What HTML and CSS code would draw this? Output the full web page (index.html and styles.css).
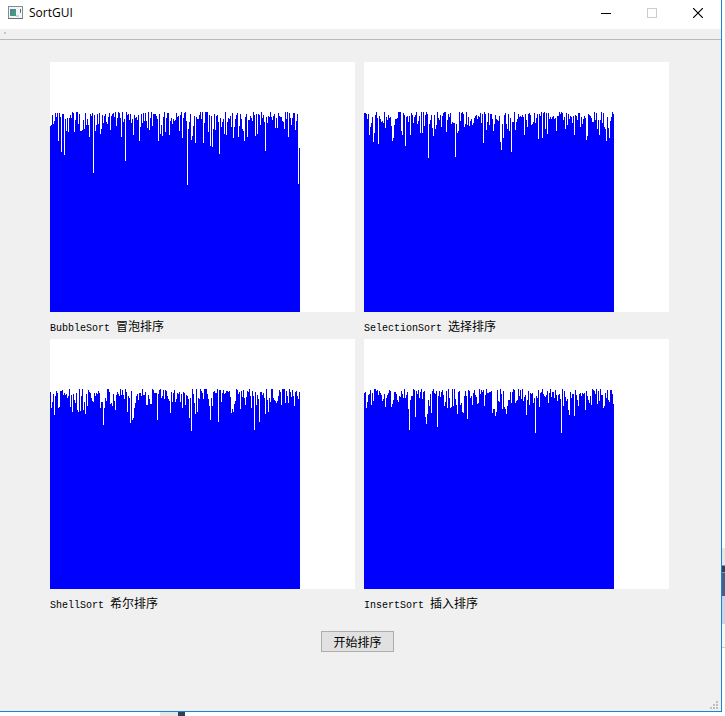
FILE: index.html
```html
<!DOCTYPE html>
<html lang="zh-CN">
<head>
<meta charset="utf-8">
<title>SortGUI</title>
<link rel="stylesheet" href="styles.css">
</head>
<body>
<div class="desktop">
  <main class="window">
    <header class="titlebar">
      <svg class="app-icon" width="15" height="13" viewBox="0 0 15 13" shape-rendering="crispEdges" aria-hidden="true">
        <defs>
          <linearGradient id="pane" x1="0" y1="0" x2="1" y2="1">
            <stop offset="0" stop-color="#4f7fae"/>
            <stop offset="1" stop-color="#48a463"/>
          </linearGradient>
        </defs>
        <rect width="15" height="13" fill="#858b94"/>
        <rect x="1" y="1" width="13" height="11" fill="#f3f5f7"/>
        <rect y="12" width="15" height="1" fill="#686e76"/>
        <rect x="2" y="3" width="6" height="7" fill="url(#pane)"/>
        <rect x="8" y="9" width="3" height="2" fill="#d0d3d7"/>
        <rect x="12" y="3" width="1" height="3" fill="#39758b"/>
        <rect x="12" y="6" width="1" height="1" fill="#58a977"/>
      </svg>
      <h1 class="title">SortGUI</h1>
      <button class="control" type="button" aria-label="最小化">
        <svg width="10" height="10" viewBox="0 0 10 10" shape-rendering="crispEdges"><rect y="5" width="10" height="1" fill="#000"/></svg>
      </button>
      <button class="control" type="button" aria-label="最大化" disabled>
        <svg width="10" height="10" viewBox="0 0 10 10"><rect x=".5" y=".5" width="9" height="9" fill="none" stroke="#ccc"/></svg>
      </button>
      <button class="control" type="button" aria-label="关闭">
        <svg width="10" height="10" viewBox="0 0 10 10"><path d="M0 0L10 10M10 0L0 10" fill="none" stroke="#000" stroke-width="1.2"/></svg>
      </button>
    </header>
    <div class="toolbar"><span class="handle"></span></div>
    <section class="charts">
      <figure class="chart"><div class="plot" data-series="bubble"></div><figcaption>BubbleSort <span class="han">冒泡排序</span></figcaption></figure>
      <figure class="chart"><div class="plot" data-series="selection"></div><figcaption>SelectionSort <span class="han">选择排序</span></figcaption></figure>
      <figure class="chart"><div class="plot" data-series="shell"></div><figcaption>ShellSort <span class="han">希尔排序</span></figcaption></figure>
      <figure class="chart"><div class="plot" data-series="insert"></div><figcaption>InsertSort <span class="han">插入排序</span></figcaption></figure>
    </section>
    <div class="actions"><button class="start" type="button">开始排序</button></div>
    <footer class="statusbar">
      <svg width="8" height="8" viewBox="0 0 8 8" shape-rendering="crispEdges" aria-hidden="true">
        <path d="M6 0h2v2H6zM3 3h2v2H3zM6 3h2v2H6zM0 6h2v2H0zM3 6h2v2H3zM6 6h2v2H6z" fill="#bfbfbf"/>
      </svg>
    </footer>
  </main>
  <div class="edge-right"><i class="pale"></i><i class="navy"></i><i class="slate"></i><i class="lilac"></i><i class="light"></i></div>
  <div class="edge-bottom"><i class="tab"></i><i class="mark"></i></div>
</div>
<script src="charts.js"></script>
</body>
</html>
```
FILE: styles.css
```css
* {
  box-sizing: border-box;
}

body {
  margin: 0;
  background: #fff;
  color: #000;
}

.desktop {
  display: grid;
  grid-template-columns: 1fr 3px;
  grid-template-rows: 1fr 4px;
  min-height: 100vh;
}

.window {
  display: flex;
  flex-direction: column;
  background: #f0f0f0;
  border-right: 1px solid #1883d7;
  border-bottom: 1px solid #1883d7;
}

.titlebar {
  display: flex;
  align-items: center;
  height: 29px;
  padding: 0 0 4px 8px;
  background: #fff;
}

.title {
  flex: 1;
  margin: 0 0 0 6px;
  font: 400 12px/16px "Open Sans", "Noto Sans", sans-serif;
}

.control {
  display: flex;
  align-items: center;
  justify-content: center;
  width: 46px;
  height: 25px;
  padding: 0;
  border: 0;
  background: transparent;
}

.toolbar {
  height: 11px;
  padding: 3px 4px;
  border-bottom: 1px solid #b9b9b9;
}

.handle {
  display: block;
  width: 2px;
  height: 2px;
  background: #c3c3c3;
}

.charts {
  display: grid;
  grid-template-columns: 1fr 1fr;
  column-gap: 9px;
  padding: 22px 52px 0 50px;
}

.chart {
  margin: 0;
}

.plot {
  height: 250px;
  overflow: hidden;
  background: #fff;
}

.plot svg {
  display: block;
}

.chart figcaption {
  height: 27px;
  font: 10px/27px "Liberation Mono", monospace;
  white-space: pre;
}

.han {
  font: 12px/27px "Noto Sans CJK SC", sans-serif;
}

.actions {
  display: flex;
  justify-content: center;
  padding: 15px 6px 0 0;
}

.start {
  width: 73px;
  height: 21px;
  padding: 0;
  border: 1px solid #adadad;
  background: #e1e1e1;
  color: #000;
  font: 12px/19px "Noto Sans CJK SC", sans-serif;
}

.statusbar {
  display: flex;
  justify-content: flex-end;
  margin-top: auto;
  padding: 0 3px 2px;
}

.edge-right {
  display: flex;
  flex-direction: column;
  padding-top: 548px;
}

.pale {
  height: 17px;
  background: #e6e6e6;
}

.navy {
  height: 8px;
  border-top: 1px solid #8c93a5;
  border-bottom: 1px solid #8c93a5;
  background: #2f405f;
}

.slate {
  height: 23px;
  background: #4c5d85;
}

.lilac {
  height: 28px;
  background: #ccd3e5;
}

.light {
  height: 24px;
  border-bottom: 1px solid #c8cad0;
  background: #f7f7f7;
}

.edge-bottom {
  display: flex;
  grid-column: 1 / -1;
  padding-left: 160px;
}

.tab {
  width: 18px;
  background: #e6e6e6;
}

.mark {
  width: 7px;
  background: #2f405f;
}
```
FILE: charts.js
```js
// Each value is the distance from the tallest level to the top of one bar.
const series = {
  bubble: [
    14,13,3,12,9,1,5,1,29,1,5,40,2,2,43,7,19,6,20,6,3,6,0,1,20,8,0,0,12,2,19,19,18,8,17,1,13,7,13,25,
    2,4,1,61,3,19,13,2,12,1,22,17,3,11,4,2,10,12,5,1,18,4,2,1,5,0,14,6,0,1,6,25,0,10,7,49,0,3,2,8,2,11,7,23,
    3,6,5,8,3,29,15,2,11,1,9,1,9,16,0,18,6,0,14,2,2,2,4,7,29,2,22,13,24,5,0,20,6,1,1,23,9,6,12,7,9,
    8,1,5,4,19,3,0,26,6,1,0,9,73,17,10,2,28,24,14,4,31,5,7,7,3,0,7,0,31,11,0,0,0,20,3,34,4,35,17,2,18,4,3,10,42,
    6,15,10,7,22,0,23,10,6,7,4,15,1,26,15,7,3,1,25,14,2,7,17,19,29,5,2,25,8,8,4,6,9,0,3,24,2,22,2,3,13,0,6,3,10,39,
    5,11,4,5,0,5,8,4,2,16,6,16,1,4,5,5,9,10,17,0,7,0,25,1,6,13,6,1,1,18,9,2,72,36
  ],
  selection: [
    1,1,2,7,2,23,15,11,5,30,21,3,0,6,32,4,7,10,9,11,0,16,5,8,3,
    6,5,14,29,26,13,7,7,6,0,0,0,19,23,1,3,34,5,4,10,4,23,1,3,11,
    5,3,0,12,9,4,21,0,21,0,14,3,0,2,46,12,8,3,16,24,3,17,13,0,6,
    8,3,15,4,1,0,0,20,8,2,5,1,12,10,11,11,45,12,21,19,0,9,1,0,2,
    15,12,0,13,5,14,9,7,13,11,6,4,3,7,4,5,1,11,2,31,0,2,18,10,1,
    13,2,2,7,19,12,3,7,8,9,4,30,38,12,26,3,1,12,17,2,19,6,40,10,10,
    0,18,10,7,2,5,4,5,3,5,23,2,8,15,2,1,3,13,12,10,1,11,6,2,27,
    2,4,0,26,1,0,17,1,22,1,7,5,7,5,4,7,6,19,4,4,0,2,0,1,8,
    5,17,1,13,2,7,4,5,11,4,23,3,4,8,1,1,15,5,12,7,4,6,28,24,2,
    3,4,6,10,10,0,8,1,17,8,23,8,0,11,1,15,17,29,5,16,26,9,5,0,2
  ],
  shell: [
    3,19,13,5,26,7,2,4,19,18,2,2,1,6,4,6,5,9,7,0,18,6,23,5,11,
    14,4,21,23,0,22,7,0,21,13,25,5,17,1,3,4,9,12,13,4,7,4,5,2,4,
    19,13,13,36,19,9,12,0,0,3,15,14,17,5,12,21,6,3,5,7,0,6,1,6,10,
    0,3,23,7,9,34,2,31,29,19,14,7,5,11,4,4,7,0,6,6,3,16,16,6,10,
    15,15,0,1,4,4,4,31,5,1,0,9,7,1,10,1,2,7,10,12,24,3,13,4,1,
    13,10,4,5,3,13,5,19,3,4,16,6,7,10,29,9,42,0,5,14,25,0,23,9,10,
    0,2,4,10,0,0,0,5,10,17,31,9,17,3,2,4,4,0,33,1,1,13,4,1,5,
    4,2,2,3,2,8,24,20,23,15,12,0,1,5,3,20,2,8,1,9,16,8,2,3,0,
    7,19,2,7,41,3,16,6,10,33,3,3,6,4,9,25,0,11,23,9,13,0,0,9,11,
    12,14,12,7,1,3,16,0,0,0,14,2,7,14,0,3,8,1,7,17,3,2,7,10,3
  ],
  insert: [
    4,3,19,13,6,5,1,16,4,12,0,0,2,1,6,2,4,6,12,10,5,18,9,6,4,
    1,2,18,15,11,3,3,5,11,13,7,8,2,5,9,0,9,6,3,20,41,11,7,7,0,
    1,28,2,5,1,9,3,0,10,3,2,28,35,25,11,17,5,24,2,0,4,5,2,38,7,
    2,8,3,1,6,17,13,2,19,0,9,19,18,0,17,0,10,16,25,3,2,16,14,23,24,
    7,2,7,30,1,2,9,7,16,4,1,6,8,15,14,0,5,1,3,1,17,6,0,4,4,
    3,3,2,24,20,20,27,23,1,12,13,0,5,20,2,18,20,25,17,11,11,3,14,3,0,
    1,14,12,11,0,7,1,10,0,12,8,6,26,11,2,16,4,5,4,14,9,44,7,9,1,
    18,4,3,0,5,7,8,6,2,14,4,0,8,3,3,9,1,6,12,6,5,10,44,0,17,
    2,8,12,10,21,26,3,9,5,5,27,1,6,11,17,5,4,7,4,5,4,21,2,7,11,
    14,7,16,0,1,2,5,0,15,2,12,0,6,6,19,17,4,9,1,11,13,1,1,5,15
  ]
};

const LEVEL = 50;
const HEIGHT = 250;

for (const plot of document.querySelectorAll(".plot")) {
  const values = series[plot.dataset.series];
  const count = values.length;
  const path = values.map((v, i) => `M${i} ${LEVEL + v}h1V${HEIGHT}h-1z`).join("");
  plot.innerHTML = `<svg width="${count}" height="${HEIGHT}" viewBox="0 0 ${count} ${HEIGHT}" shape-rendering="crispEdges" aria-hidden="true"><path d="${path}" fill="#00f"/></svg>`;
}
```
